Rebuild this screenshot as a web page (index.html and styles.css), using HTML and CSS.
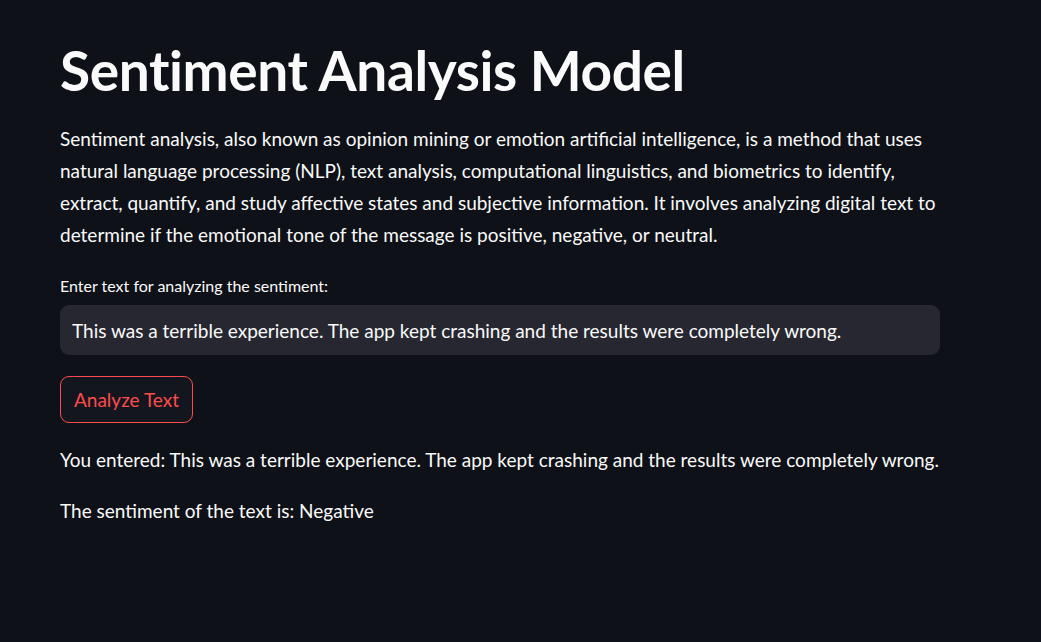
FILE: index.html
```html
<!DOCTYPE html>
<html lang="en">
<head>
<meta charset="utf-8">
<title>Sentiment Analysis Model</title>
<link rel="stylesheet" href="styles.css">
</head>
<body>
<main class="app">
  <div class="block">
    <h1 class="title">Sentiment Analysis Model</h1>
    <p class="intro">Sentiment analysis, also known as opinion mining or emotion artificial intelligence, is a method that uses natural language processing (NLP), text analysis, computational linguistics, and biometrics to identify, extract, quantify, and study affective states and subjective information. It involves analyzing digital text to determine if the emotional tone of the message is positive, negative, or neutral.</p>
    <div class="field">
      <label class="label" for="txt">Enter text for analyzing the sentiment:</label>
      <div class="input"><input id="txt" type="text" value="This was a terrible experience. The app kept crashing and the results were completely wrong."></div>
    </div>
    <div class="btn-row"><button class="btn" type="button">Analyze Text</button></div>
    <p class="out">You entered: This was a terrible experience. The app kept crashing and the results were completely wrong.</p>
    <p class="out">The sentiment of the text is: Negative</p>
  </div>
</main>
</body>
</html>
```
FILE: styles.css
```css
* { box-sizing: border-box; }
html, body {
  margin: 0;
  padding: 0;
  background: #0e1117;
  color: #fafafa;
  font-family: "Lato", "Open Sans", "Liberation Sans", sans-serif;
  font-size: 20px;
  min-height: 642px;
}
.app {
  padding: 0 0 0 60px;
}
.block {
  width: 880px;
  display: flex;
  flex-direction: column;
}
.title {
  margin: 0;
  padding: 37px 0 20px;
  font-size: 55px;
  font-weight: 700;
  line-height: 1.2;
  letter-spacing: -0.4px;
}
.intro {
  margin: 0 0 24px;
  line-height: 32px;
  font-size: 19px;
}
.field {
  display: flex;
  flex-direction: column;
  gap: 8px;
}
.label {
  font-size: 16px;
  line-height: 22px;
}
.input {
  background: #262730;
  border-radius: 9px;
  height: 50px;
  display: flex;
  align-items: center;
  padding: 0 12px;
}
.input input {
  width: 100%;
  background: transparent;
  border: 0;
  outline: 0;
  color: #fafafa;
  font: inherit;
  font-size: 19px;
  padding: 0;
}
.btn-row {
  padding-top: 21px;
}
.btn {
  background: #13161e;
  border: 1px solid #ff4b4b;
  color: #ff4b4b;
  border-radius: 9px;
  font: inherit;
  font-size: 19px;
  height: 47px;
  padding: 0 13px;
}
.out {
  margin: 0;
  font-size: 19px;
  line-height: 32px;
}
.btn-row + .out { margin-top: 21px; }
.out + .out { margin-top: 19px; }
```
